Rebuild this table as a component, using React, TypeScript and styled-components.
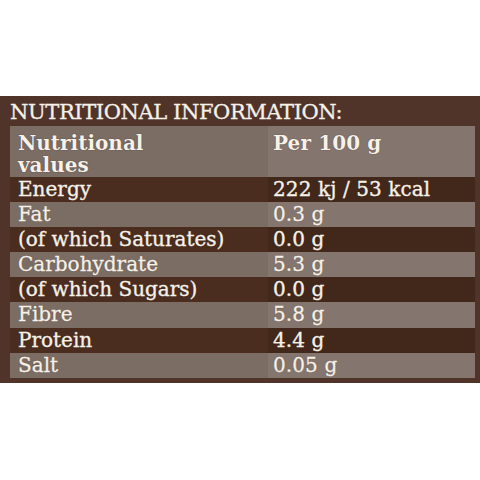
import styled, { createGlobalStyle } from "styled-components";

const GlobalStyle = createGlobalStyle`
  html, body {
    margin: 0;
    padding: 0;
    background: #ffffff;
  }
`;

const Page = styled.div`
  width: 480px;
  height: 480px;
  padding-top: 96px;
  box-sizing: border-box;
`;

const Panel = styled.section`
  background: #50342a;
  height: 287px;
  padding: 0 5px 5px 10px;
  box-sizing: border-box;
  display: flex;
  flex-direction: column;
  font-family: "DejaVu Serif", "Liberation Serif", serif;
  color: #f7f1e8;
  text-shadow: 0 0 1px rgba(30, 15, 8, 0.7);
  -webkit-text-stroke: 0.35px #f7f1e8;
`;

const Title = styled.h1`
  margin: 0;
  height: 30px;
  font-size: 21px;
  font-weight: normal;
  line-height: 32px;
  letter-spacing: -0.4px;
  white-space: nowrap;
`;

const Table = styled.div`
  display: grid;
  grid-template-columns: 258px 1fr;
`;

const Cell = styled.div<{ $shade: "light" | "dark"; $value?: boolean; $head?: boolean }>`
  background: ${(p) =>
    p.$shade === "light"
      ? p.$value ? "#84766e" : "#7b6c64"
      : p.$value ? "#42281b" : "#4a2d1f"};
  height: ${(p) => (p.$head ? "51px" : "25.1px")};
  padding: ${(p) => (p.$head ? "6px" : "0")} 0 0 ${(p) => (p.$value ? "5px" : "8px")};
  box-sizing: border-box;
  font-size: ${(p) => (p.$head ? "20px" : "20px")};
  font-weight: ${(p) => (p.$head ? "bold" : "normal")};
  line-height: ${(p) => (p.$head ? "22px" : "25px")};
  letter-spacing: ${(p) => (p.$value ? "0.1px" : "0")};
  white-space: nowrap;
  -webkit-text-stroke: ${(p) => (p.$head ? "0" : "0.35px #f7f1e8")};
`;

const rows: [string, string][] = [
  ["Energy", "222 kj / 53 kcal"],
  ["Fat", "0.3 g"],
  ["(of which Saturates)", "0.0 g"],
  ["Carbohydrate", "5.3 g"],
  ["(of which Sugars)", "0.0 g"],
  ["Fibre", "5.8 g"],
  ["Protein", "4.4 g"],
  ["Salt", "0.05 g"],
];

export default function App() {
  return (
    <Page>
      <GlobalStyle />
      <Panel>
        <Title>NUTRITIONAL INFORMATION:</Title>
        <Table>
          <Cell $shade="light" $head>
            Nutritional
            <br />
            values
          </Cell>
          <Cell $shade="light" $head $value>
            Per 100 g
          </Cell>
          {rows.map(([label, value], i) => {
            const shade = i % 2 === 0 ? "dark" : "light";
            return [
              <Cell key={label} $shade={shade}>{label}</Cell>,
              <Cell key={label + "-v"} $shade={shade} $value>{value}</Cell>,
            ];
          })}
        </Table>
      </Panel>
    </Page>
  );
}
